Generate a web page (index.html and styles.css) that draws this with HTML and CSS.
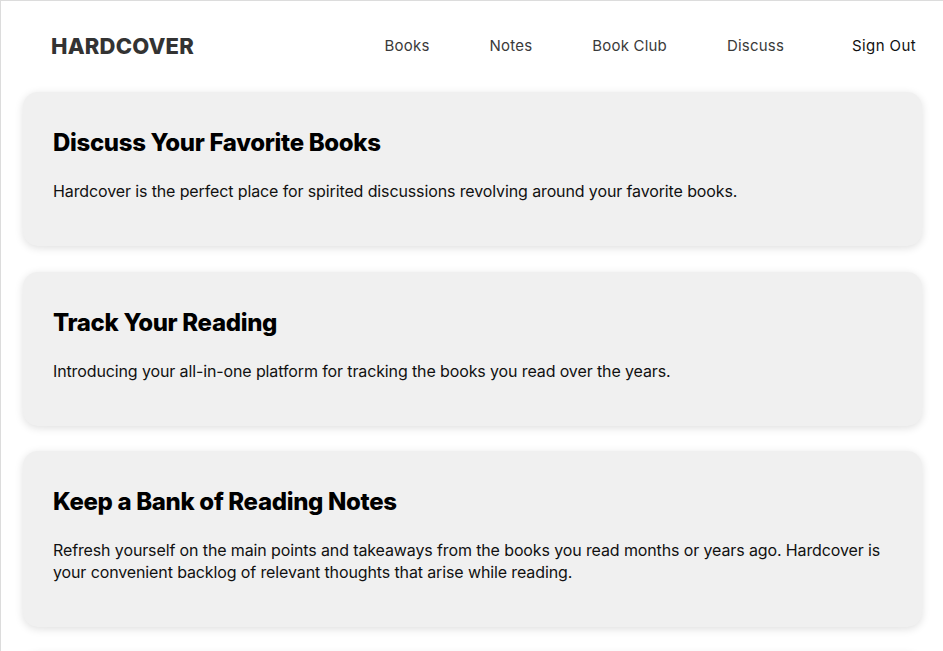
FILE: index.html
```html
<!DOCTYPE html>
<html lang="en">
<head>
<meta charset="utf-8">
<title>Hardcover</title>
<link rel="stylesheet" href="styles.css">
</head>
<body>
<div class="frame">
  <header class="topbar">
    <div class="logo">HARDCOVER</div>
    <nav class="nav">
      <a class="nav-link" href="#">Books</a>
      <a class="nav-link" href="#">Notes</a>
      <a class="nav-link" href="#">Book Club</a>
      <a class="nav-link" href="#">Discuss</a>
      <a class="nav-link nav-signout" href="#">Sign Out</a>
    </nav>
  </header>
  <main class="cards">
    <section class="card">
      <h2 class="card-title">Discuss Your Favorite Books</h2>
      <p class="card-text">Hardcover is the perfect place for spirited discussions revolving around your favorite books.</p>
    </section>
    <section class="card">
      <h2 class="card-title">Track Your Reading</h2>
      <p class="card-text">Introducing your all-in-one platform for tracking the books you read over the years.</p>
    </section>
    <section class="card">
      <h2 class="card-title">Keep a Bank of Reading Notes</h2>
      <p class="card-text">Refresh yourself on the main points and takeaways from the books you read months or years ago. Hardcover is your convenient backlog of relevant thoughts that arise while reading.</p>
    </section>
    <section class="card card-next"></section>
  </main>
</div>
</body>
</html>
```

FILE: styles.css
```css
* { box-sizing: border-box; }
html, body { margin: 0; padding: 0; background: #fff; }
body { font-family: Inter, "Noto Sans", sans-serif; color: #111; }
.frame {
  border-top: 1px solid #dcdcdc;
  border-left: 1px solid #dcdcdc;
  min-height: 100vh;
}
.topbar {
  display: flex;
  align-items: center;
  justify-content: space-between;
  height: 89px;
  padding: 0 27px 0 50px;
}
.logo {
  font-size: 22px;
  font-weight: 800;
  color: #333;
  letter-spacing: 0.2px;
}
.nav { display: flex; align-items: center; }
.nav-link {
  font-size: 15px;
  color: #3a3a3a;
  text-decoration: none;
  margin-left: 60px;
  letter-spacing: 0.2px;
}
.nav-signout { margin-left: 68px; color: #111; letter-spacing: 0.4px; }
.cards {
  display: flex;
  flex-direction: column;
  gap: 25.5px;
  padding: 2px 21px 0 22px;
}
.card {
  background: #f0f0f0;
  border-radius: 15px;
  box-shadow: 0 2px 8px rgba(0, 0, 0, 0.13);
  padding: 34px 30px 44px;
}
.card-next { height: 160px; }
.card-title {
  margin: 0 0 21px;
  font-size: 24px;
  line-height: 33px;
  font-weight: 800;
  color: #000;
  letter-spacing: -0.33px;
}
.card-text {
  margin: 0;
  font-size: 16px;
  line-height: 22px;
  color: #111;
  letter-spacing: -0.12px;
}
```
